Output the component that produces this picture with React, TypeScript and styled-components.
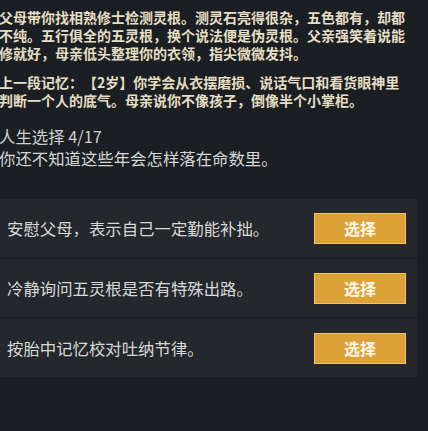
import styled, { createGlobalStyle } from 'styled-components';

const GlobalStyle = createGlobalStyle`
  html, body {
    margin: 0;
    padding: 0;
    background: #1b1e23;
  }
  body {
    font-family: "Noto Sans CJK SC", "Noto Sans", sans-serif;
    text-spacing-trim: space-all;
    overflow: hidden;
  }
`;

const Page = styled.div`
  width: 428px;
  height: 431px;
  background: #1b1e23;
  padding-top: 8px;
  box-sizing: border-box;
`;

const Story = styled.p`
  width: 412px;
  margin: 0 0 11px -1px;
  font-size: 14px;
  line-height: 18px;
  font-weight: 700;
  color: #e4dec3;
`;

const Heading = styled.div`
  margin-top: 16px;
  margin-left: -1px;
  font-size: 16.4px;
  line-height: 22px;
  color: #cfcfcf;
`;

const Hint = styled.div`
  margin-left: -1px;
  font-size: 16.4px;
  line-height: 22px;
  color: #d6d6d6;
`;

const ChoiceList = styled.div`
  margin-top: 30px;
  width: 417px;
  display: flex;
  flex-direction: column;
  gap: 2px;
`;

const ChoiceRow = styled.div`
  height: 58px;
  display: flex;
  align-items: center;
  justify-content: space-between;
  padding: 0 11px 0 7px;
  background: #24272c;
`;

const ChoiceText = styled.span`
  font-size: 16.4px;
  color: #d9d9d9;
`;

const PickButton = styled.button`
  width: 92px;
  height: 31px;
  border: 1px solid #f2c466;
  background: #dca238;
  color: #fff8e8;
  font-family: inherit;
  font-size: 16px;
  font-weight: 700;
  padding: 0;
  cursor: pointer;
`;

const choices = [
  '安慰父母，表示自己一定勤能补拙。',
  '冷静询问五灵根是否有特殊出路。',
  '按胎中记忆校对吐纳节律。',
];

export default function App() {
  return (
    <Page>
      <GlobalStyle />
      <Story>
        父母带你找相熟修士检测灵根。测灵石亮得很杂，五色都有，却都不纯。五行俱全的五灵根，换个说法便是伪灵根。父亲强笑着说能修就好，母亲低头整理你的衣领，指尖微微发抖。
      </Story>
      <Story>
        上一段记忆：【2岁】你学会从衣摆磨损、说话气口和看货眼神里判断一个人的底气。母亲说你不像孩子，倒像半个小掌柜。
      </Story>
      <Heading>人生选择 4/17</Heading>
      <Hint>你还不知道这些年会怎样落在命数里。</Hint>
      <ChoiceList>
        {choices.map((text) => (
          <ChoiceRow key={text}>
            <ChoiceText>{text}</ChoiceText>
            <PickButton>选择</PickButton>
          </ChoiceRow>
        ))}
      </ChoiceList>
    </Page>
  );
}
